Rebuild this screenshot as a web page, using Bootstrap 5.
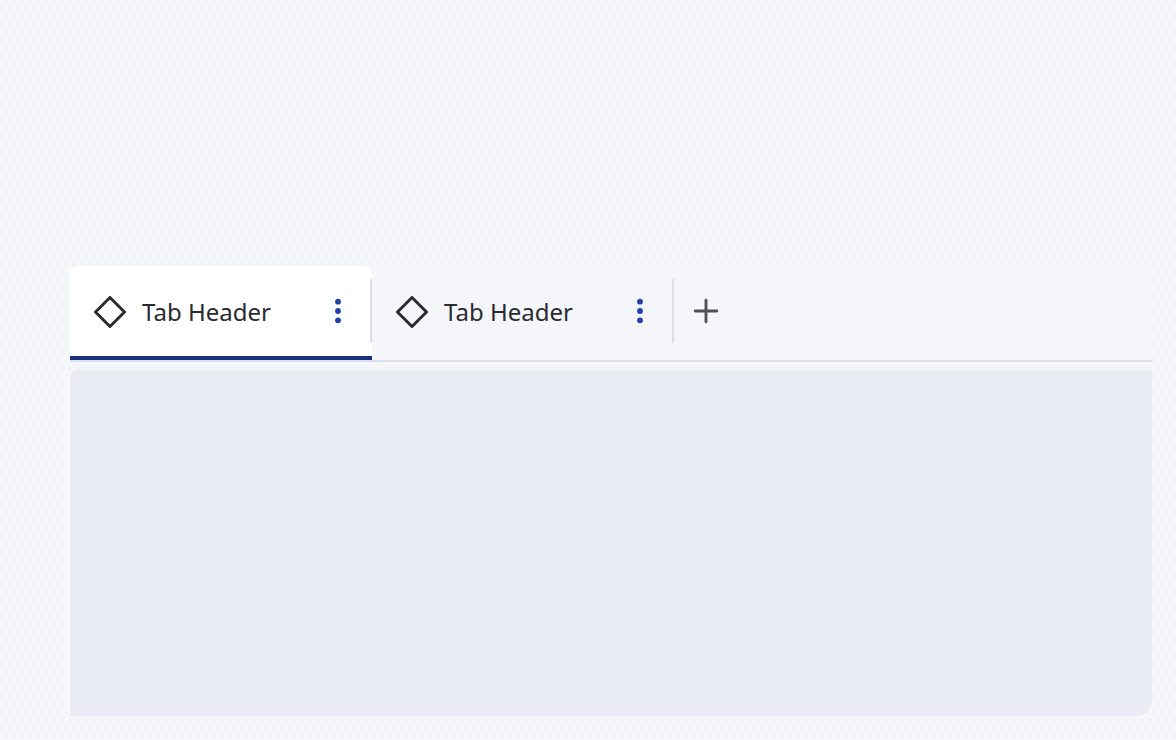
<!DOCTYPE html>
<html lang="en">
<head>
<meta charset="utf-8">
<meta name="viewport" content="width=device-width, initial-scale=1">
<title>Tabs</title>
<link href="https://cdn.jsdelivr.net/npm/bootstrap@5.3.0/dist/css/bootstrap.min.css" rel="stylesheet">
<style>
  body {
    font-family: "Noto Sans", sans-serif;
    color: #2a2b30;
    background-color: #f5f7fb;
    /* staggered dot pattern */
    background-image: url("data:image/svg+xml,%3Csvg xmlns='http://www.w3.org/2000/svg' width='8' height='16'%3E%3Cpath d='M2 7h1v2H2zM6 15h1v1H6zM6 0h1v1H6z' fill='%23e0e2e7'/%3E%3C/svg%3E");
  }
  .page-frame { padding: 266px 24px 24px 70px; }
  .tab-strip { background: #f4f6fa; border-bottom: 2px solid #dde1ee; border-radius: 8px 8px 0 0; }
  .tab-item { width: 302px; height: 94px; padding: 0 24px; border-bottom: 4px solid transparent; border-radius: 8px 8px 0 0; position: relative; }
  .tab-item.current { background: #fff; border-bottom-color: #19307c; }
  .tab-item::after { content: ""; position: absolute; right: 0; top: 13px; width: 2px; height: 64px; background: #dbdfec; }
  .bare { background: none; border: 0; padding: 0; }
  .tab-button { gap: 16px; padding-top: 2px; font-size: 24px; line-height: 32px; color: inherit; }
  .menu-button { width: 20px; height: 32px; }
  .add-button { width: 32px; height: 32px; margin: 29px 16px; }
  .tab-panel { min-height: 346px; margin-top: 8px; background: #e9ecf5; border-radius: 8px 0 16px 0; }
</style>
</head>
<body>
<main class="page-frame min-vh-100 d-flex flex-column">
  <div class="tab-strip d-flex align-items-start">
    <div class="d-flex" role="tablist">
      <div class="tab-item current d-flex align-items-center justify-content-between" role="presentation">
        <button class="bare tab-button d-flex align-items-center" id="tab-1" type="button" role="tab" aria-selected="true" aria-controls="panel">
          <svg width="32" height="32" viewBox="0 0 32 32" fill="none" stroke="#2a2b30" stroke-width="3" stroke-linejoin="round" aria-hidden="true"><path d="M16 1.5 30.5 16 16 30.5 1.5 16Z"/></svg>
          <span>Tab Header</span>
        </button>
        <button class="menu-button bare d-flex align-items-center justify-content-center" type="button" aria-label="Tab options">
          <svg width="6" height="26" viewBox="0 0 6 26" fill="#2042a8" aria-hidden="true"><circle cx="3" cy="3.7" r="2.9"/><circle cx="3" cy="13" r="2.9"/><circle cx="3" cy="22.3" r="2.9"/></svg>
        </button>
      </div>
      <div class="tab-item d-flex align-items-center justify-content-between" role="presentation">
        <button class="bare tab-button d-flex align-items-center" id="tab-2" type="button" role="tab" aria-selected="false" aria-controls="panel">
          <svg width="32" height="32" viewBox="0 0 32 32" fill="none" stroke="#2a2b30" stroke-width="3" stroke-linejoin="round" aria-hidden="true"><path d="M16 1.5 30.5 16 16 30.5 1.5 16Z"/></svg>
          <span>Tab Header</span>
        </button>
        <button class="menu-button bare d-flex align-items-center justify-content-center" type="button" aria-label="Tab options">
          <svg width="6" height="26" viewBox="0 0 6 26" fill="#2042a8" aria-hidden="true"><circle cx="3" cy="3.7" r="2.9"/><circle cx="3" cy="13" r="2.9"/><circle cx="3" cy="22.3" r="2.9"/></svg>
        </button>
      </div>
    </div>
    <button class="add-button bare d-flex align-items-center justify-content-center" type="button" aria-label="Add tab">
      <svg width="32" height="32" viewBox="0 0 32 32" fill="none" stroke="#505158" stroke-width="2.9" stroke-linecap="round" aria-hidden="true"><path d="M5.2 16H26.8M16 5.2V26.8"/></svg>
    </button>
  </div>
  <section class="tab-panel flex-grow-1" id="panel" role="tabpanel" aria-labelledby="tab-1"></section>
</main>
<script src="https://cdn.jsdelivr.net/npm/bootstrap@5.3.0/dist/js/bootstrap.bundle.min.js"></script>
</body>
</html>
